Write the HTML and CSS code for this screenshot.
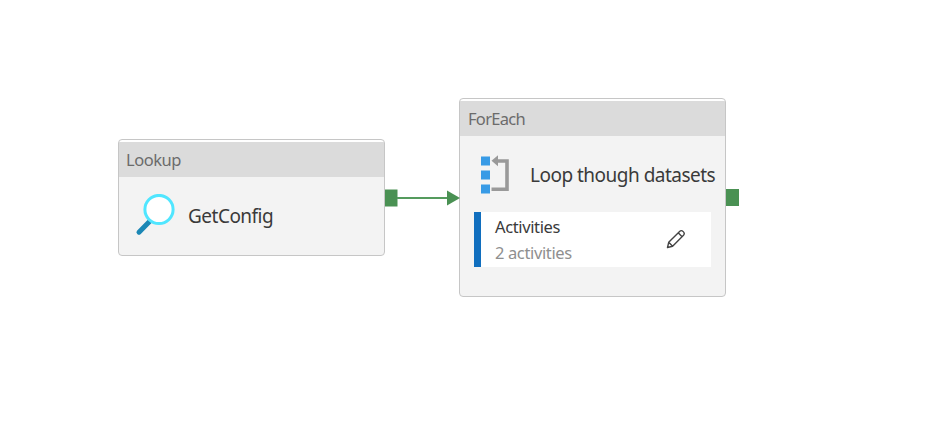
FILE: index.html
```html
<!DOCTYPE html>
<html lang="en">
<head>
<meta charset="utf-8">
<title>Pipeline</title>
<link rel="stylesheet" href="styles.css">
</head>
<body>
<main class="canvas">
  <section class="node node-lookup">
    <header class="node-type">Lookup</header>
    <div class="node-main">
      <svg class="icon-lookup" width="40" height="43" viewBox="0 0 40 43">
        <path d="M4 38.200 15.500 26.500" stroke="#1b87b5" stroke-width="5" stroke-linecap="round"/>
        <circle cx="24" cy="15.500" r="14.100" fill="#fff" stroke="#50e6ff" stroke-width="3"/>
      </svg>
      <span class="name">GetConfig</span>
    </div>
  </section>

  <section class="node node-foreach">
    <header class="node-type">ForEach</header>
    <div class="node-main">
      <svg class="icon-loop" width="30" height="40" viewBox="0 0 30 40">
        <path d="M1 1.500h9v9H1zM1 15.500h9v9H1zM1 29.500h9v9H1z" fill="#389be6"/>
        <path d="M17 6h10v28.300H11.500" fill="none" stroke="#999" stroke-width="3.600"/>
        <path d="M11.500 5.800 18 .3v11z" fill="#999"/>
      </svg>
      <span class="name">Loop though datasets</span>
    </div>
    <div class="activities">
      <div class="activities-text">
        <span>Activities</span>
        <span class="count">2 activities</span>
      </div>
      <svg class="icon-edit" width="20" height="20" viewBox="0 0 20 20" fill="none" stroke="#444" stroke-width="1.400" stroke-linejoin="round">
        <path d="M1.500 18.500 2.700 13.300 13.600 2.400C15.900.2 19.700 3.900 17.500 6.300L6.600 17.200zM2.700 13.300 6.600 17.200M12.200 3.800 16.100 7.700"/>
      </svg>
    </div>
  </section>

  <svg class="link" width="90" height="18" viewBox="0 0 90 18">
    <path d="M0 .5h12.500v17H0z" fill="#4a9153"/>
    <path d="M12 9h52" stroke="#559b5e" stroke-width="2"/>
    <path d="M62 1.500 75 9 62 16.500z" fill="#4a9153"/>
  </svg>
  <span class="port"></span>
</main>
</body>
</html>
```
FILE: styles.css
```css
* { box-sizing: border-box; }
body {
  margin: 0;
  background: #fff;
  font-family: "Noto Sans", "Open Sans", sans-serif;
  color: #3a3a3a;
}
.canvas { position: relative; width: 942px; height: 429px; overflow: hidden; }
.node {
  position: absolute;
  width: 267px;
  padding-top: 2px;
  background: linear-gradient(#fff 4px, #f3f3f3 4px);
  border: 1px solid #c6c6c6;
  border-radius: 4px;
}
.node-lookup { left: 118px; top: 139px; height: 117px; }
.node-foreach { left: 459px; top: 98px; height: 199px; }
.node-type {
  height: 35px;
  padding-left: 7px;
  background: #dbdbdb;
  color: #6b6b6b;
  font-size: 16.500px;
  line-height: 36px;
  letter-spacing: -0.450px;
}
.node-foreach .node-type { padding-left: 8px; letter-spacing: -0.700px; }
.node-main { display: flex; align-items: center; height: 77px; }
.icon-lookup { margin-left: 16px; }
.icon-loop { margin-left: 20px; }
.name { font-size: 19px; line-height: 26px; letter-spacing: -0.510px; white-space: nowrap; }
.node-lookup .name { margin-left: 13px; }
.node-foreach .name { margin-left: 20px; }
.activities {
  display: flex;
  align-items: center;
  justify-content: space-between;
  width: 237px;
  height: 55px;
  margin: -1px 0 0 14px;
  padding: 0 25px 0 14px;
  background: #fff;
  border-left: 7px solid #106ebe;
}
.activities-text { display: flex; flex-direction: column; font-size: 16.500px; line-height: 26px; letter-spacing: -0.370px; }
.count { color: #8f8f8f; }
.icon-edit { margin-top: -1px; }
.link { position: absolute; left: 385px; top: 189px; }
.port { position: absolute; left: 726px; top: 189px; width: 13px; height: 17px; background: #4a9153; }
```
